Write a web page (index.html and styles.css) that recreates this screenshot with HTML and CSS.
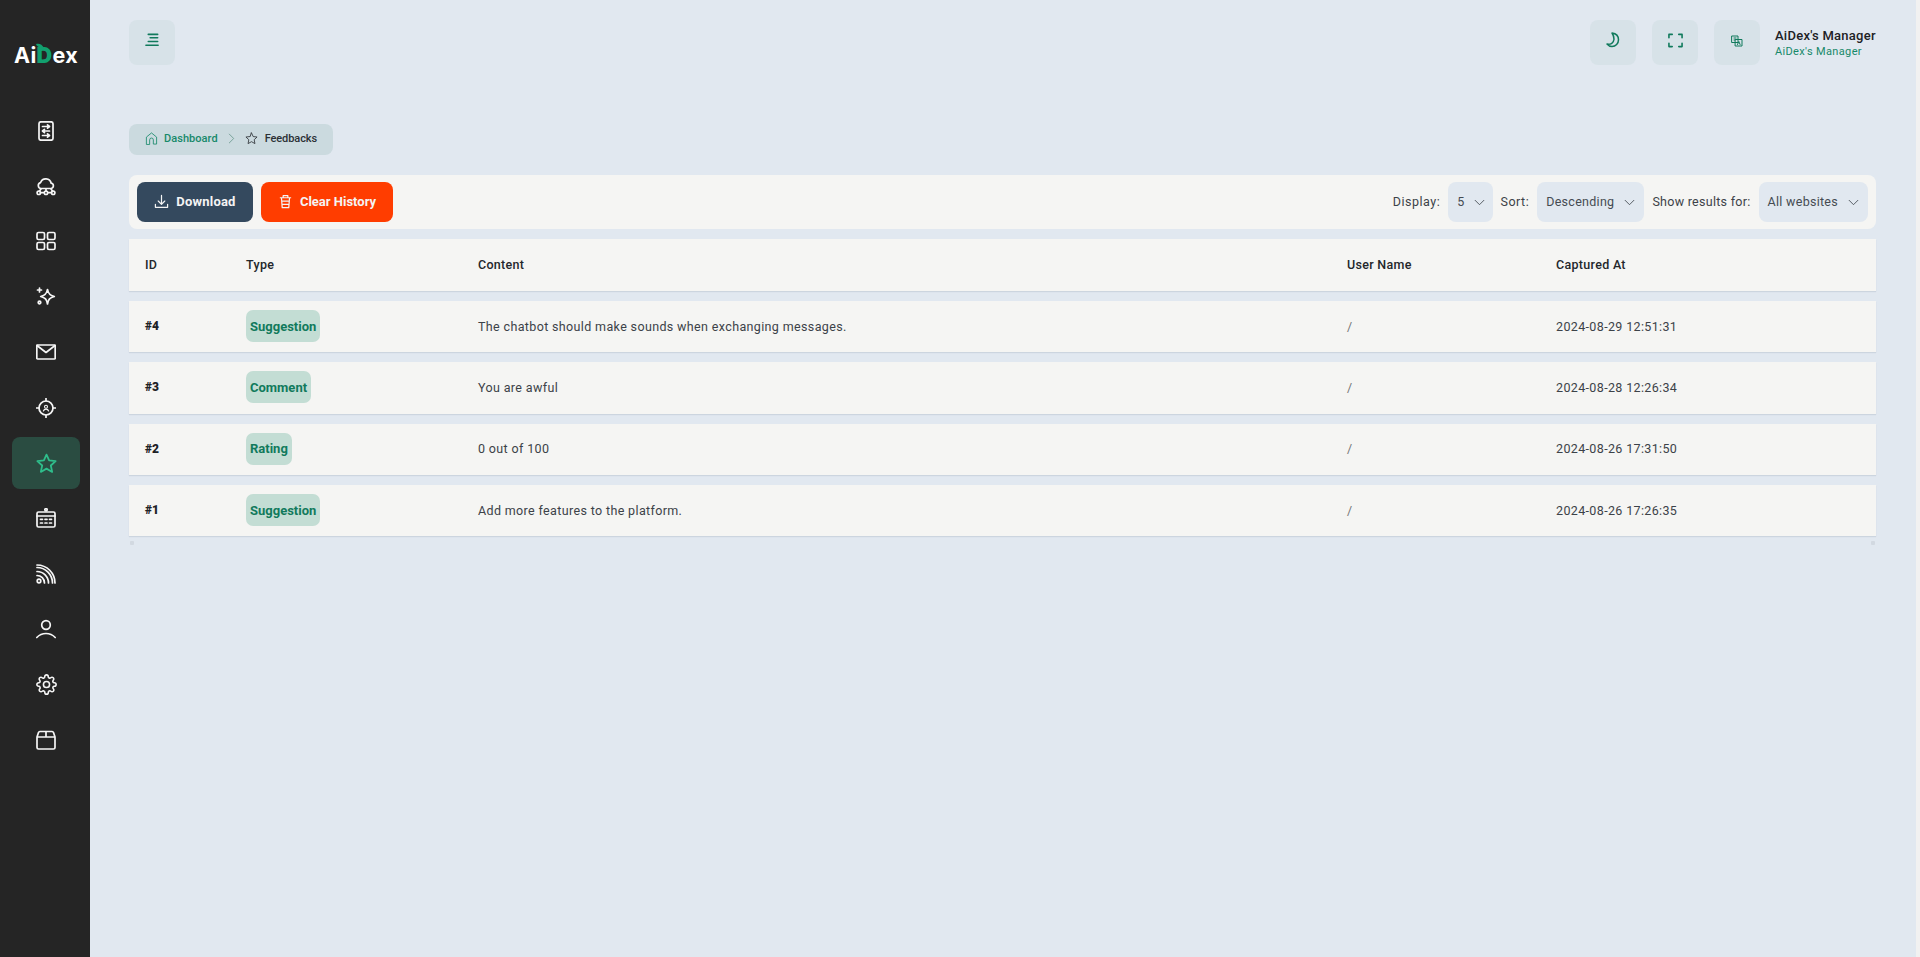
FILE: index.html
```html
<!DOCTYPE html>
<html lang="en">
<head>
<meta charset="utf-8">
<title>Feedbacks</title>
<link rel="stylesheet" href="styles.css">
</head>
<body>
<div class="app">
  <aside class="sidebar">
    <div class="logo">Ai<span class="logo-d">D<svg class="leaf" viewBox="0 0 8 6"><path d="M0 1 C3 0 6 1 8 5 C4 5 1 4 0 1Z"/></svg></span>ex</div>
    <nav class="nav">
      <a class="nav-item"><svg viewBox="0 0 20 20"><rect x="3" y="0.8" width="14" height="18.4" rx="2"/><path d="M6.5 5.5h7M11.5 3.8l2 1.7-2 1.7M6.5 10h7M8.5 8.3l-2 1.7 2 1.7M6.5 14.5h7M11.5 12.8l2 1.7-2 1.7"/></svg></a>
      <a class="nav-item"><svg viewBox="0 0 20 20"><path d="M5 12.5a3 3 0 0 1-.4-5.9 5.5 5.5 0 0 1 10.6.6 2.7 2.7 0 0 1 0 5.3H5z"/><path d="M10 13v2M5 13l-1.500 2M15 13l1.500 2M4.500 16.700h3M12.500 16.700h3"/><circle cx="2.800" cy="16.800" r="1.700"/><circle cx="10" cy="16.800" r="1.700"/><circle cx="17.200" cy="16.800" r="1.700"/></svg></a>
      <a class="nav-item"><svg viewBox="0 0 20 20"><rect x="1" y="1.500" width="7.500" height="7" rx="1.500"/><rect x="11.500" y="1.500" width="7.500" height="7" rx="1.500"/><rect x="1" y="11.500" width="7.500" height="7" rx="1.500"/><rect x="11.500" y="11.500" width="7.500" height="7" rx="1.500"/></svg></a>
      <a class="nav-item"><svg viewBox="0 0 20 20"><path d="M11.500 2.500c.8 4.200 2.300 5.800 6.800 7-4.500 1.200-6 2.800-6.800 7.500-.8-4.700-2.300-6.300-6.800-7.500 4.500-1.200 6-2.800 6.800-7z"/><path d="M3.500 1v4M1.500 3h4"/><circle cx="3.500" cy="15.500" r="1.300"/></svg></a>
      <a class="nav-item"><svg viewBox="0 0 20 20"><rect x="0.800" y="3" width="18.400" height="14" rx="0.800"/><path d="M1 3.500l9 7 9-7"/></svg></a>
      <a class="nav-item"><svg viewBox="0 0 20 20"><circle class="thin" cx="10" cy="8.800" r="1.500"/><path class="thin" d="M7.400 13c.4-1.300 1.400-1.900 2.600-1.900s2.200.6 2.600 1.900"/><circle cx="10" cy="10" r="7"/><path d="M10 0.300v2.500M10 17.200v2.500M0.300 10h2.500M17.200 10h2.500"/></svg></a>
      <a class="nav-item active"><svg viewBox="0 0 20 20"><path d="M10 1.500l2.500 5.600 6.200.7-4.600 4.100 1.300 6.100-5.400-3.100-5.400 3.100 1.300-6.100L1.300 7.800l6.200-.7z"/></svg></a>
      <a class="nav-item"><svg viewBox="0 0 20 20"><rect x="1" y="4" width="18" height="15" rx="1.500"/><circle cx="10" cy="1.800" r="1.200"/><path d="M1 8h18M4.500 11.300h2M9 11.300h2M13.500 11.300h2M4.500 15h2M9 15h2M13.500 15h2"/></svg></a>
      <a class="nav-item"><svg viewBox="0 0 20 20"><circle cx="3" cy="17" r="1.800"/><path d="M1 11.500a7.500 7.500 0 0 1 7.500 7.500M1 7.500A11.500 11.500 0 0 1 12.500 19M1 3.500A15.500 15.500 0 0 1 16.500 19M1 1a18 18 0 0 1 18 18"/></svg></a>
      <a class="nav-item"><svg viewBox="0 0 20 20"><circle cx="10" cy="6" r="4.300"/><path d="M0.800 18.500c2.500-2.700 5.500-4 9.200-4s6.700 1.300 9.200 4"/></svg></a>
      <a class="nav-item"><svg class="gear" viewBox="0 0 24 24"><circle cx="12" cy="12" r="3.500"/><path d="M19.400 15a1.650 1.650 0 0 0 .33 1.820l.06.06a2 2 0 0 1 0 2.830 2 2 0 0 1-2.830 0l-.06-.06a1.650 1.650 0 0 0-1.820-.33 1.650 1.650 0 0 0-1 1.510V21a2 2 0 0 1-2 2 2 2 0 0 1-2-2v-.09A1.650 1.650 0 0 0 9 19.400a1.650 1.650 0 0 0-1.820.33l-.06.06a2 2 0 0 1-2.830 0 2 2 0 0 1 0-2.830l.06-.06a1.650 1.650 0 0 0 .33-1.820 1.650 1.650 0 0 0-1.510-1H3a2 2 0 0 1-2-2 2 2 0 0 1 2-2h.09A1.650 1.650 0 0 0 4.600 9a1.650 1.650 0 0 0-.33-1.820l-.06-.06a2 2 0 0 1 0-2.830 2 2 0 0 1 2.830 0l.06.06a1.650 1.650 0 0 0 1.820.33H9a1.650 1.650 0 0 0 1-1.510V3a2 2 0 0 1 2-2 2 2 0 0 1 2 2v.09a1.650 1.650 0 0 0 1 1.510 1.650 1.650 0 0 0 1.820-.33l.06-.06a2 2 0 0 1 2.830 0 2 2 0 0 1 0 2.830l-.06.06a1.650 1.650 0 0 0-.33 1.820V9a1.650 1.650 0 0 0 1.510 1H21a2 2 0 0 1 2 2 2 2 0 0 1-2 2h-.09a1.650 1.650 0 0 0-1.510 1z"/></svg></a>
      <a class="nav-item"><svg viewBox="0 0 20 20"><path d="M1 7v10.500a1.500 1.500 0 0 0 1.500 1.500h15a1.500 1.500 0 0 0 1.500-1.500V7M1 7l1.500-4.500A1.500 1.500 0 0 1 4 1.500h12a1.500 1.500 0 0 1 1.500 1L19 7M1 7h18M10 1.500V7"/></svg></a>
    </nav>
  </aside>

  <main class="main">
    <header class="topbar">
      <button class="icon-btn"><svg class="ic-15 ic-up" viewBox="0 0 16 16"><path d="M3.500 1.500h10M5.500 5h8M3.500 9h10M1 13h13"/></svg></button>
      <div class="topbar-right">
        <button class="icon-btn"><svg class="ic-16 ic-up" viewBox="0 0 16 16"><path d="M7 1c3.700.5 6.500 3 6.500 6.800 0 3.700-2.800 6.700-6.500 6.700-2 0-3.800-.9-5-2.400 3.700.7 6.700-1.300 7-4.800.1-2.200-.8-4.500-2-6.300z"/></svg></button>
        <button class="icon-btn"><svg class="ic-15 ic-up" viewBox="0 0 16 16"><path d="M1 5V1.500h3.500M11.500 1.500H15V5M15 11v3.500h-3.500M4.500 14.500H1V11"/></svg></button>
        <button class="icon-btn icon-btn-last"><svg class="ic-11 ic-up-s" viewBox="0 0 12 12"><path d="M1 1h6v6.500H1zM4.500 4.500H11V11H4.500zM3 3h2M3 5h1M6.500 9.500l1.300-3 1.300 3"/></svg></button>
        <div class="user">
          <div class="user-name">AiDex's Manager</div>
          <div class="user-role">AiDex's Manager</div>
        </div>
      </div>
    </header>

    <div class="breadcrumb">
      <svg class="bc-icon bc-green" viewBox="0 0 14 14"><path d="M1.500 13V5.500L7 1l5.500 4.500V13h-3.500V8.500a2 2 0 0 0-4 0V13z"/></svg>
      <span class="bc-link">Dashboard</span>
      <svg class="bc-chev" viewBox="0 0 8 12"><path d="M1.500 1l5 5-5 5"/></svg>
      <svg class="bc-icon bc-dark" viewBox="0 0 14 14"><path d="M7 1l1.800 3.900 4.200.5-3.100 2.900.8 4.200L7 10.400l-3.700 2.100.8-4.200L1 5.400l4.200-.5z"/></svg>
      <span class="bc-current">Feedbacks</span>
    </div>

    <section class="toolbar">
      <div class="actions">
        <button class="btn btn-download"><svg viewBox="0 0 16 16"><path d="M8 1.500v9M4.500 7.500L8 11l3.500-3.500M1.500 11v3.200h13V11"/></svg>Download</button>
        <button class="btn btn-clear"><svg viewBox="0 0 16 16"><path d="M2.500 4h11M5.500 4V1.800h5V4M3.700 4l.8 10.500h7l.8-10.500M5 7.500h6M5.300 11h5.400"/></svg>Clear History</button>
      </div>
      <div class="filters">
        <span class="filter-label filter-label-wide">Display:</span>
        <div class="select select-num"><span>5</span><svg viewBox="0 0 12 8"><path d="M1 1.500l5 5 5-5"/></svg></div>
        <span class="filter-label filter-label-wide">Sort:</span>
        <div class="select"><span>Descending</span><svg viewBox="0 0 12 8"><path d="M1 1.500l5 5 5-5"/></svg></div>
        <span class="filter-label">Show results for:</span>
        <div class="select"><span>All websites</span><svg viewBox="0 0 12 8"><path d="M1 1.500l5 5 5-5"/></svg></div>
      </div>
    </section>

    <section class="table">
      <div class="row row-head">
        <div class="cell">ID</div><div class="cell">Type</div><div class="cell">Content</div><div class="cell">User Name</div><div class="cell">Captured At</div>
      </div>
      <div class="row">
        <div class="cell cell-id">#4</div><div class="cell"><span class="tag">Suggestion</span></div><div class="cell">The chatbot should make sounds when exchanging messages.</div><div class="cell cell-user">/</div><div class="cell">2024-08-29 12:51:31</div>
      </div>
      <div class="row">
        <div class="cell cell-id">#3</div><div class="cell"><span class="tag">Comment</span></div><div class="cell">You are awful</div><div class="cell cell-user">/</div><div class="cell">2024-08-28 12:26:34</div>
      </div>
      <div class="row">
        <div class="cell cell-id">#2</div><div class="cell"><span class="tag">Rating</span></div><div class="cell">0 out of 100</div><div class="cell cell-user">/</div><div class="cell">2024-08-26 17:31:50</div>
      </div>
      <div class="row">
        <div class="cell cell-id">#1</div><div class="cell"><span class="tag">Suggestion</span></div><div class="cell">Add more features to the platform.</div><div class="cell cell-user">/</div><div class="cell">2024-08-26 17:26:35</div>
      </div>
      <div class="table-scroll"><i class="corner"></i><i class="corner"></i></div>
    </section>
  </main>
  <div class="scroll-strip"></div>
</div>
</body>
</html>
```

FILE: styles.css
```css
* { box-sizing: border-box; }
html, body { margin: 0; height: 100%; }
body {
  font-family: "Roboto", "Liberation Sans", sans-serif;
  font-size: 13px;
  color: #2c3136;
  background: #e1e8f0;
  overflow: hidden;
}
button { font: inherit; border: 0; padding: 0; cursor: pointer; }
svg { display: block; fill: none; stroke: currentColor; stroke-linecap: round; stroke-linejoin: round; }

.app { display: flex; height: 957px; }

/* Sidebar */
.sidebar { width: 90px; flex: none; background: #252525; padding-left: 2px; display: flex; flex-direction: column; align-items: center; }
.logo { margin-top: 41px; font-family: "Inter", sans-serif; font-weight: 700; font-size: 21.500px; line-height: 28px; color: #fff; letter-spacing: 0.300px; display: flex; }
.logo-d { color: #12a06f; font-weight: 900; position: relative; }
.leaf { position: absolute; left: -1px; top: 2px; width: 8px; height: 6px; fill: #12a06f; stroke: none; }
.nav { margin-top: 35.500px; display: flex; flex-direction: column; width: 68px; }
.nav-item { height: 52px; margin-bottom: 3.430px; display: flex; align-items: center; justify-content: center; color: #f6f6f6; border-radius: 8px; }
.nav-item svg { width: 20px; height: 20px; stroke-width: 1.700; }
.nav-item svg .thin { stroke-width: 1.100; }
.nav-item svg.gear { width: 21px; height: 21px; stroke-width: 1.800; }
.nav-item.active { background: #2a4c41; color: #2fbd8b; }
.nav-item.active svg { width: 21px; height: 21px; }

/* Main */
.main { flex: 1; min-width: 0; padding: 20px 40px 0 39px; }
.scroll-strip { width: 4px; flex: none; background: #f1f1f1; }
.topbar { display: flex; justify-content: space-between; height: 45px; }
.topbar-right { display: flex; align-items: center; }
.icon-btn { width: 46px; height: 45px; border-radius: 8px; background: #d7e2e8; color: #117a5c; display: flex; align-items: center; justify-content: center; margin-right: 16px; }
.icon-btn-last { margin-right: 15px; }
.ic-15 { width: 15px; height: 15px; stroke-width: 1.700; }
.ic-16 { width: 16px; height: 16px; stroke-width: 1.500; }
.ic-up { margin-bottom: 5px; }
.ic-up-s { margin-bottom: 3px; }
.ic-11 { width: 12px; height: 12px; stroke-width: 1; }
.user { width: 101px; align-self: flex-start; padding-top: 8px; white-space: nowrap; }
.user-name { font-size: 13px; font-weight: 500; line-height: 16px; color: #1d2125; letter-spacing: 0.250px; }
.user-role { font-size: 11px; line-height: 15px; margin-top: 0; color: #17896a; letter-spacing: 0.350px; }

/* Breadcrumb */
.breadcrumb { margin-top: 59px; height: 31px; width: 204px; padding: 0 0 2px 16px; border-radius: 8px; background: #cbdadf; display: flex; align-items: center; font-size: 11px; font-weight: 500; }
.bc-icon { width: 13px; height: 13px; stroke-width: 0.900; }
.bc-green { color: #17896a; }
.bc-dark { color: #2c3136; }
.bc-link { margin-left: 6px; color: #17896a; letter-spacing: 0.050px; }
.bc-chev { width: 7px; height: 11px; margin: 0 10px; color: #6f9c91; stroke-width: 1; }
.bc-current { margin-left: 7px; color: #2c3136; letter-spacing: -0.100px; }

/* Toolbar */
.toolbar { margin-top: 20px; height: 54px; border-radius: 8px; background: #f5f5f3; display: flex; justify-content: space-between; align-items: center; padding: 0 8px; }
.actions { display: flex; gap: 8px; }
.btn { height: 40px; padding-bottom: 2px; border-radius: 8px; color: #f4f4f4; font-weight: 700; font-size: 13px; display: flex; align-items: center; justify-content: center; gap: 7px; }
.btn svg { width: 15px; height: 15px; stroke-width: 1.300; }
.btn-download { width: 116px; background: #34495e; letter-spacing: 0.200px; }
.btn-clear { width: 132px; background: #ff3d00; }
.filters { display: flex; align-items: center; gap: 8px; font-size: 12.500px; letter-spacing: 0.280px; }
.filter-label { color: #3c4248; padding-bottom: 2px; }
.filter-label-wide { letter-spacing: 0.500px; }
.select { height: 40px; padding: 0 9px 2px; border-radius: 8px; background: #e1e8f0; color: #454b52; display: flex; align-items: center; gap: 9px; }
.select span { margin-right: 1px; }
.select svg { width: 11px; height: 7px; stroke-width: 1; margin-top: 2px; }
.select-num { padding: 0 8px 2px 9px; gap: 8px; }

/* Table */
.table { margin-top: 10px; display: flex; flex-direction: column; gap: 10px; }
.row { height: 51.330px; background: #f5f5f3; display: grid; grid-template-columns: 101px 232px 869px 209px 1fr; align-items: center; box-shadow: 0 1px 1px rgba(60, 80, 110, 0.120); font-size: 12.500px; letter-spacing: 0.360px; color: #3c4248; }
.row-head { height: 52px; font-weight: 500; color: #23272b; letter-spacing: 0.300px; }
.cell { padding: 0 0 1px 16px; white-space: nowrap; }
.cell-id { font-weight: 900; color: #1d2125; font-size: 12px; letter-spacing: 0; }
.cell-user { color: #777; }
.tag { display: inline-flex; align-items: center; height: 32px; padding: 0 4px; border-radius: 7px; background: #c3ddd4; color: #117a5c; font-weight: 700; font-size: 13px; letter-spacing: 0; vertical-align: top; }
.table-scroll { display: flex; justify-content: space-between; margin-top: -5px; height: 5px; padding: 0 1px; }
.corner { width: 4px; height: 4px; background: #d2d9e1; border-radius: 1px; }
```
